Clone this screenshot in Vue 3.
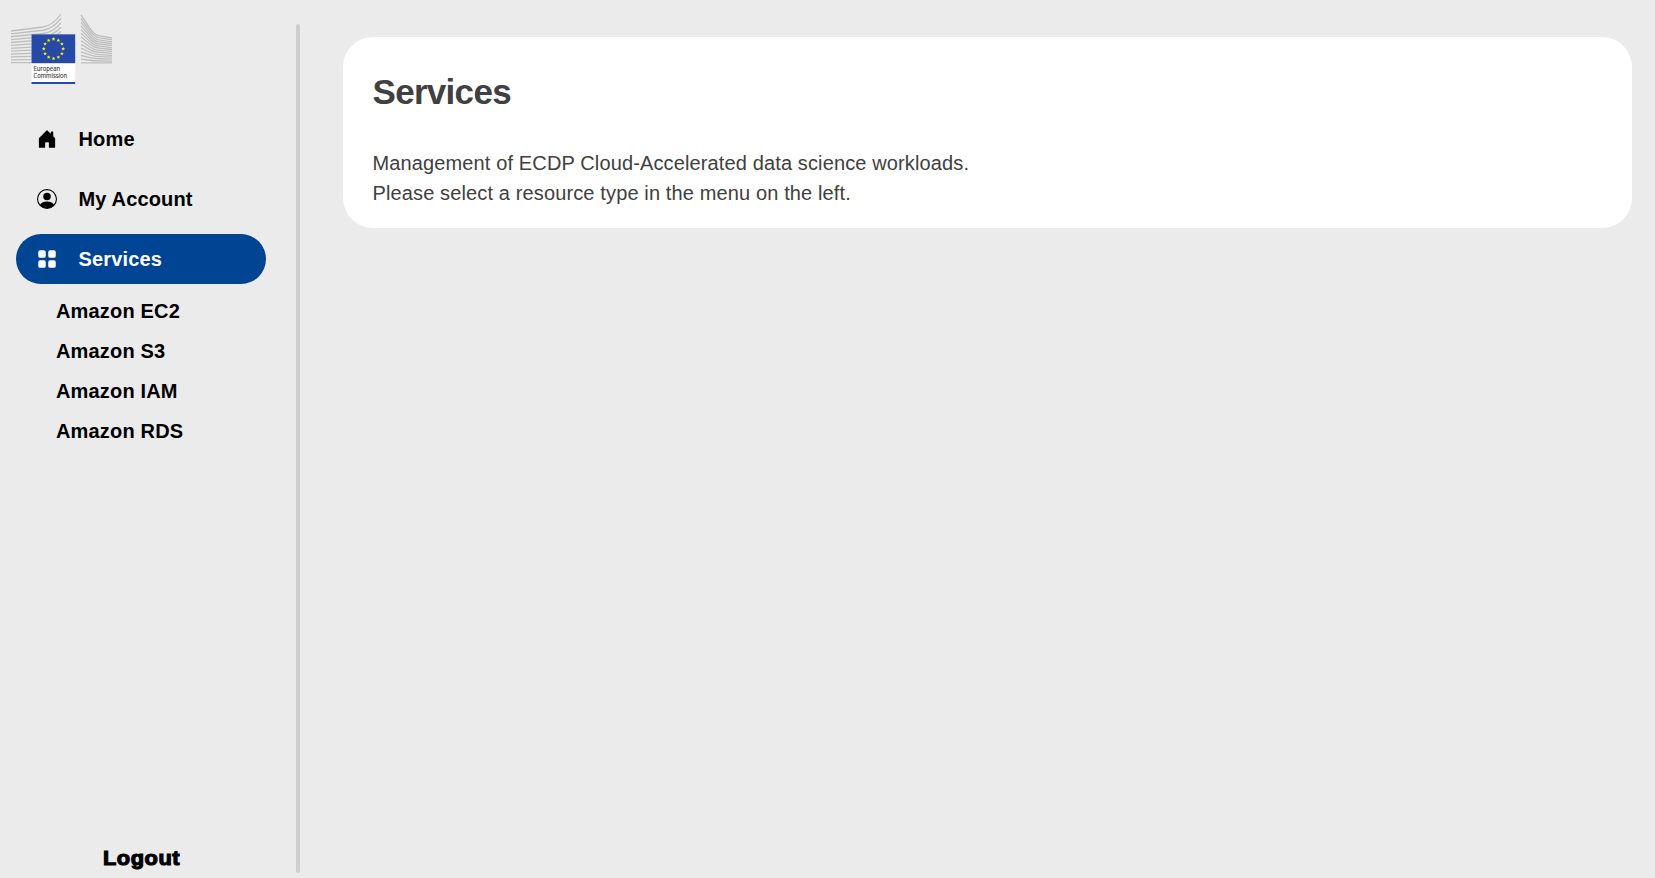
<script setup>
const nav = [
  { id: 'home', label: 'Home' },
  { id: 'account', label: 'My Account' },
  { id: 'services', label: 'Services', active: true },
]
const resources = ['Amazon EC2', 'Amazon S3', 'Amazon IAM', 'Amazon RDS']

const leftLines = Array.from({ length: 12 }, (_, i) => {
  const y = 31 + i * 2.88
  const k = 1 - i / 11
  return `M11 ${y}L43 ${y - 4 * k}Q${53} ${y - 5.5 * k} 61 ${14 + i * 4.4}`
})
const rightLines = Array.from({ length: 14 }, (_, i) => {
  const a = 14.8 + i * 3.7
  const b = 38 + i * 1.92
  const k = 1 - i / 13
  return `M81 ${a}L${90} ${a + 13.5 * k}Q94 ${b - 3.5 * k} 99 ${b - 2.4 * k}L112 ${b}`
})
const stars = Array.from({ length: 12 }, (_, i) => {
  const t = (i * Math.PI) / 6
  const cx = 53.5 + 9.7 * Math.sin(t)
  const cy = 48.8 - 9.7 * Math.cos(t)
  return Array.from({ length: 10 }, (_, j) => {
    const r = j % 2 ? 0.9 : 2
    const u = (j * Math.PI) / 5
    return `${cx + r * Math.sin(u)},${cy - r * Math.cos(u)}`
  }).join(' ')
})
</script>

<template>
  <div class="page">
    <aside class="sidebar">
      <svg class="logo" viewBox="0 0 130 100" width="130" height="100">
        <g class="lines">
          <path v-for="d in leftLines" :key="d" :d="d" />
          <path v-for="d in rightLines" :key="d" :d="d" />
        </g>
        <rect x="31.5" y="34.3" width="43.7" height="49.7" fill="#fff" />
        <rect x="31.5" y="34.3" width="43.7" height="28.9" fill="#2549a5" />
        <rect x="31.5" y="82" width="43.7" height="2" fill="#2549a5" />
        <polygon v-for="p in stars" :key="p" :points="p" fill="#f3ee14" />
        <text x="33.5" y="70.7" textLength="26.5" lengthAdjust="spacingAndGlyphs">European</text>
        <text x="33.5" y="78" textLength="33.5" lengthAdjust="spacingAndGlyphs">Commission</text>
      </svg>

      <nav class="menu">
        <a v-for="item in nav" :key="item.id" class="item" :class="{ active: item.active }">
          <svg class="icon" viewBox="0 0 16 16" width="20" height="20" fill="currentColor">
            <path v-if="item.id === 'home'" d="M6.5 14.5v-3.505c0-.245.25-.495.5-.495h2c.25 0 .5.25.5.5v3.5a.5.5 0 0 0 .5.5h4a.5.5 0 0 0 .5-.5v-7a.5.5 0 0 0-.146-.354L13 5.793V2.5a.5.5 0 0 0-.5-.5h-1a.5.5 0 0 0-.5.5v1.293L8.354 1.146a.5.5 0 0 0-.708 0l-6 6A.5.5 0 0 0 1.5 7.5v7a.5.5 0 0 0 .5.5h4a.5.5 0 0 0 .5-.5Z" />
            <template v-else-if="item.id === 'account'">
              <path d="M11 6a3 3 0 1 1-6 0 3 3 0 0 1 6 0z" />
              <path fill-rule="evenodd" d="M0 8a8 8 0 1 1 16 0A8 8 0 0 1 0 8zm8-7a7 7 0 0 0-5.468 11.37C3.242 11.226 4.805 10 8 10s4.757 1.225 5.468 2.37A7 7 0 0 0 8 1z" />
            </template>
            <path v-else d="M1 2.5A1.5 1.5 0 0 1 2.5 1h3A1.5 1.5 0 0 1 7 2.5v3A1.5 1.5 0 0 1 5.5 7h-3A1.5 1.5 0 0 1 1 5.5v-3zm8 0A1.5 1.5 0 0 1 10.5 1h3A1.5 1.5 0 0 1 15 2.5v3A1.5 1.5 0 0 1 13.5 7h-3A1.5 1.5 0 0 1 9 5.5v-3zm-8 8A1.5 1.5 0 0 1 2.5 9h3A1.5 1.5 0 0 1 7 10.5v3A1.5 1.5 0 0 1 5.5 15h-3A1.5 1.5 0 0 1 1 13.5v-3zm8 0A1.5 1.5 0 0 1 10.5 9h3a1.5 1.5 0 0 1 1.5 1.5v3a1.5 1.5 0 0 1-1.5 1.5h-3A1.5 1.5 0 0 1 9 13.5v-3z" />
          </svg>
          <span>{{ item.label }}</span>
        </a>
      </nav>

      <div class="submenu">
        <a v-for="r in resources" :key="r">{{ r }}</a>
      </div>

      <a class="logout">Logout</a>
    </aside>

    <div class="divider"></div>

    <main class="content">
      <section class="card">
        <h1>Services</h1>
        <p>Management of ECDP Cloud-Accelerated data science workloads.<br />Please select a resource type in the menu on the left.</p>
      </section>
    </main>
  </div>
</template>

<style>
body {
  background: #ebebeb;
}
</style>

<style scoped>
.page {
  display: flex;
  height: 878px;
  overflow: hidden;
  background: #ebebeb;
  font-family: "Liberation Sans", Arial, sans-serif;
  font-size: 20px;
}
.sidebar {
  display: flex;
  flex-direction: column;
  width: 296px;
  flex: none;
}
.logo {
  display: block;
  flex: none;
}
.lines path {
  fill: none;
  stroke: #bebebe;
  stroke-width: 1.3;
}
.logo text {
  font: 6.8px "Open Sans", sans-serif;
  fill: #404040;
  stroke: #404040;
  stroke-width: 0.15px;
}
.menu {
  display: flex;
  flex-direction: column;
  gap: 10px;
  margin: 14px 30px 0 16px;
}
.item {
  display: flex;
  align-items: center;
  gap: 21.5px;
  height: 50px;
  padding-left: 21px;
  border-radius: 25px;
  font-weight: bold;
  letter-spacing: 0.15px;
  color: #000;
}
.item.active {
  background: #004494;
  color: #fff;
}
.submenu {
  display: flex;
  flex-direction: column;
  margin: 7px 0 0 56px;
  font-weight: bold;
  line-height: 40px;
  letter-spacing: 0.17px;
}
.logout {
  align-self: flex-start;
  margin: auto 0 5px 103px;
  font-weight: 900;
  line-height: 30px;
  letter-spacing: 0.5px;
  -webkit-text-stroke: 1.1px #000;
  transform: scaleX(1.09);
  transform-origin: left;
}
.divider {
  flex: none;
  width: 4px;
  height: 849px;
  margin-top: 24px;
  border-radius: 2px;
  background: #cecece;
}
.content {
  flex: 1;
  padding: 37px 23px 0 43px;
}
.card {
  box-sizing: border-box;
  height: 191px;
  padding: 30px 30px 30px 29.5px;
  border-radius: 30px;
  background: #fff;
  color: #404040;
}
h1 {
  margin: 0;
  font-size: 35px;
  line-height: 50px;
  letter-spacing: -0.7px;
}
p {
  margin: 31px 0 0;
  line-height: 30px;
  letter-spacing: 0.13px;
}
</style>
